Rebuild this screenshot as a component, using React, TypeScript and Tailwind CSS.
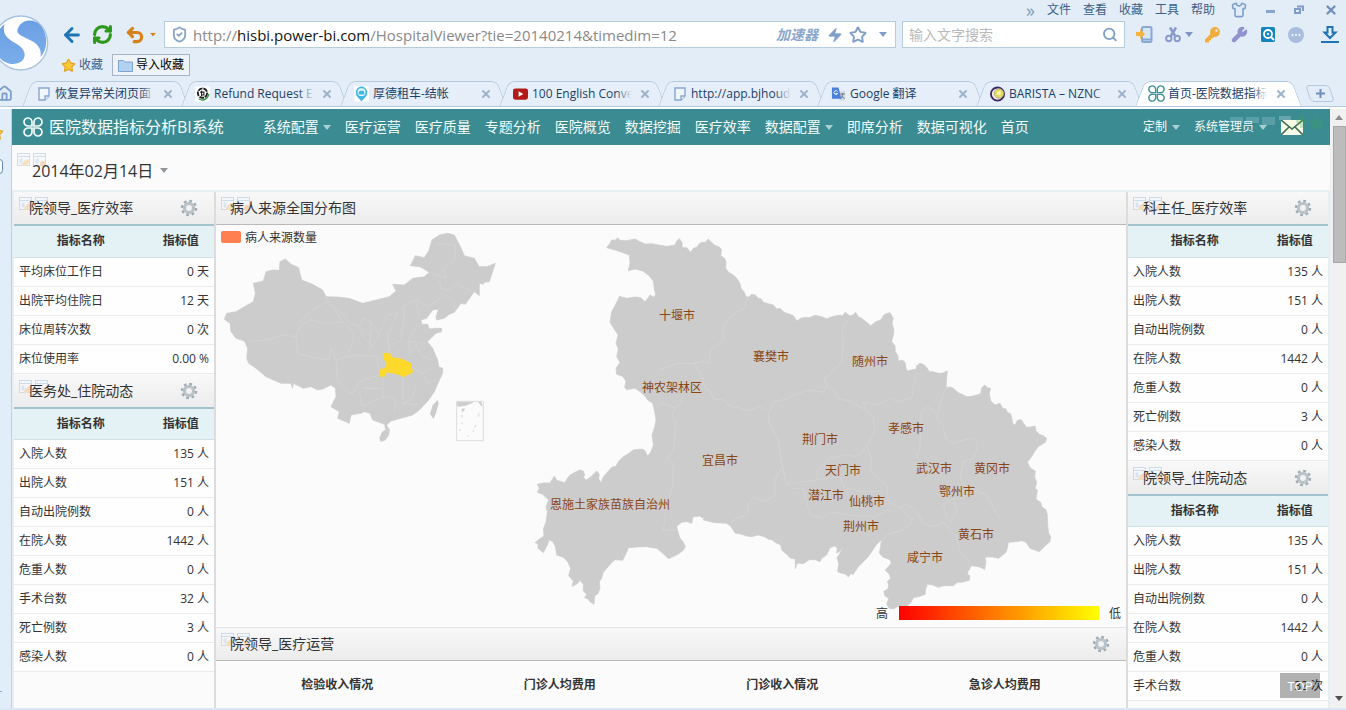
import React from 'react';
import {
  ArrowLeft,
  RefreshCw,
  Undo2,
  ShieldCheck,
  Star,
  Zap,
  Search,
  Shirt,
  Wrench,
  House,
  X,
} from 'lucide-react';

type Row = [string, string];

function Caret({ className = '' }: { className?: string }) {
  return (
    <svg viewBox="0 0 8 5" className={`h-[5px] w-2 shrink-0 ${className}`} aria-hidden="true">
      <path d="M0 0h8L4 5z" fill="currentColor" />
    </svg>
  );
}

function Clover({ className = '' }: { className?: string }) {
  return (
    <svg viewBox="0 0 20 20" className={`shrink-0 ${className}`} fill="none" stroke="currentColor" strokeWidth="1.7" aria-hidden="true">
      <path d="M9 9V5.2A4 4 0 1 0 5.2 9Z" />
      <path d="M11 9V5.2A4 4 0 1 1 14.8 9Z" />
      <path d="M9 11V14.8A4 4 0 1 1 5.2 11Z" />
      <path d="M11 11V14.8A4 4 0 1 0 14.8 11Z" />
    </svg>
  );
}

function Gear() {
  return (
    <svg viewBox="0 0 18 18" className="h-[18px] w-[18px]" fill="none" aria-hidden="true">
      <circle cx="9" cy="9" r="7" stroke="#9fabb2" strokeWidth="2.4" strokeDasharray="2.75 2.75" />
      <circle cx="9" cy="9" r="5" stroke="#b6c0c6" strokeWidth="2.2" />
      <circle cx="9" cy="9" r="3.6" stroke="#8f9ba3" strokeWidth="0.6" />
    </svg>
  );
}

function EditMarks({ className = '' }: { className?: string }) {
  return (
    <svg viewBox="0 0 30 15" className={`h-[15px] w-[30px] opacity-70 ${className}`} aria-hidden="true">
      {[0, 16].map((x) => (
        <g key={x} transform={`translate(${x} 0)`}>
          <rect x="0.5" y="0.5" width="12" height="12" fill="#f4f8fd" stroke="#bdd1e8" />
          <path d="M1 3.5h11" stroke="#bdd1e8" />
          <rect x="2.5" y="5.500" width="3" height="5" fill="#cfdff2" />
        </g>
      ))}
      <path d="M5 13l1-4 4-3 3 2-4 5z" fill="#f5d5a8" />
      <circle cx="26" cy="11" r="3" fill="#f2c9a0" />
    </svg>
  );
}

function BrowserLogo() {
  return (
    <svg viewBox="-21 44 168 168" className="-ml-[7px] mt-[15px] h-14 w-14 shrink-0" aria-label="浏览器">
      <defs>
        <linearGradient id="logoBlue" x1="0" y1="0" x2="0" y2="1">
          <stop offset="0" stopColor="#6b9fe4" />
          <stop offset="1" stopColor="#79adea" />
        </linearGradient>
      </defs>
      <circle cx="62" cy="128" r="81" fill="#fff" stroke="#a9c2e0" strokeWidth="4" />
      <path d="M54 84C66 54 106 54 124 78C146 108 142 148 122 170C126 142 110 128 88 118C62 106 46 100 54 84Z" fill="url(#logoBlue)" />
      <path d="M14 71C4 100 24 116 44 127C70 141 82 160 68 180C52 198 10 194-6 164C-22 130-10 88 14 71Z" fill="url(#logoBlue)" />
    </svg>
  );
}

const menus = ['文件', '查看', '收藏', '工具', '帮助'];

function BrowserBar() {
  return (
    <header className="flex items-start">
      <BrowserLogo />
      <div className="min-w-0 flex-1">
        <div className="flex h-[21px] items-center justify-end pb-0.5 pr-2 text-[12px] leading-[18px] text-[#3c5f88]">
          <button className="mr-3 text-[18px] text-[#7f9cc4]" aria-label="更多">»</button>
          <div className="flex gap-3">
            {menus.map((m) => (
              <button key={m}>{m}</button>
            ))}
          </div>
          <button className="ml-4" aria-label="皮肤"><Shirt className="h-4 w-4 text-[#7f9fcb]" strokeWidth={2.4} /></button>
          <button className="ml-[19px] mt-1 h-[3px] w-[9px] bg-[#8aa5cc]" aria-label="最小化" />
          <button className="ml-[19px]" aria-label="还原">
            <svg viewBox="0 0 10 9" className="h-[9px] w-[10px]" fill="none" stroke="#7f9dc6" strokeWidth="2"><path d="M3 1.5h6v4.5M1 4h5v4H1z" /></svg>
          </button>
          <button className="ml-5" aria-label="关闭"><X className="h-[14px] w-[14px] text-[#6f8fbd]" strokeWidth={4} /></button>
        </div>

        <div className="flex h-[27px] items-center pl-3 pr-[7px]">
          <button aria-label="后退"><ArrowLeft className="h-[22px] w-[22px] text-[#1f74b4]" strokeWidth={3.2} /></button>
          <button className="ml-[9px]" aria-label="刷新"><RefreshCw className="h-[21px] w-[21px] text-[#2d981b]" strokeWidth={3.6} /></button>
          <button className="ml-3 flex items-center" aria-label="撤销">
            <Undo2 className="h-[20px] w-[20px] text-[#d9801a]" strokeWidth={3.8} />
            <Caret className="ml-1 scale-75 text-[#d9801a]" />
          </button>
          <div className="ml-[7px] flex h-[27px] flex-1 items-center border border-[#b7cbdf] bg-white pl-1.5 pr-2">
            <ShieldCheck className="h-[17px] w-[17px] text-[#8aa6c6]" strokeWidth={2.6} />
            <div className="ml-[5px] flex-1 text-[15px] leading-[24px] text-[#8a8a8a]">
              http://<span className="text-[#151515]">hisbi.power-bi.com</span>/HospitalViewer?tie=20140214&amp;timedim=12
            </div>
            <button className="text-[14px] font-bold italic leading-5 text-[#8ba6cb]">加速器</button>
            <Zap className="ml-[9px] h-4 w-4 fill-[#809fc8] text-[#809fc8]" strokeWidth={1} />
            <Star className="ml-1.5 h-[18px] w-[18px] text-[#7f9fc8]" strokeWidth={2.6} />
            <Caret className="ml-3 text-[#7f9fc8]" />
          </div>
          <div className="ml-1.5 flex h-[27px] w-[223px] items-center border border-[#b7cbdf] bg-white px-[6px]">
            <input aria-label="搜索" placeholder="输入文字搜索" className="w-full min-w-0 bg-transparent text-[14px] leading-5 outline-none placeholder:text-[#b9b9b9]" />
            <Search className="h-[17px] w-[17px] text-[#7f9fc8]" strokeWidth={2.8} />
          </div>
          <div className="flex items-center pl-[11px]">
            <svg viewBox="0 0 17 17" className="h-[17px] w-[17px]" aria-hidden="true">
              <rect x="6" y="1" width="9.5" height="15" rx="1.5" fill="#d8e5f5" stroke="#8aa9d2" strokeWidth="2" />
              <path d="M6 13.5h9.5" stroke="#8aa9d2" strokeWidth="2" />
              <path d="M0 6h4V3l5 5-5 5v-3H0z" fill="#f5b23c" />
            </svg>
            <svg viewBox="0 0 16 17" className="ml-3 h-[17px] w-4" fill="none" stroke="#8c9bcb" aria-hidden="true">
              <circle cx="3.800" cy="12.500" r="2.700" strokeWidth="2" />
              <circle cx="12.200" cy="12.500" r="2.700" strokeWidth="2" />
              <path d="M5 1.500L10.500 10.500M11 1.500L5.500 10.500" strokeWidth="2.600" />
            </svg>
            <Caret className="ml-1 text-[#7f96c4]" />
            <svg viewBox="0 0 17 17" className="ml-[11px] h-[17px] w-[17px]" aria-hidden="true">
              <path d="M7.500 7L1 13.500V16.500h4v-2h2v-2h1.500L11 10z" fill="#f1ad3f" />
              <circle cx="11" cy="6" r="5" fill="#f1ad3f" />
              <circle cx="12.500" cy="4.500" r="1.300" fill="#e3edf8" />
            </svg>
            <Wrench className="ml-[10px] h-[17px] w-[17px] fill-[#8f94cf] text-[#8f94cf]" strokeWidth={2} />
            <svg viewBox="0 0 16 17" className="ml-3 h-[17px] w-4" fill="none" aria-hidden="true">
              <rect x="1" y="1" width="14" height="15" rx="1.5" fill="#1584bd" />
              <circle cx="8" cy="8" r="4" stroke="#fff" strokeWidth="1.8" />
              <circle cx="8" cy="8" r="1.2" fill="#cfe8f5" />
              <path d="M11 11l3 3" stroke="#fff" strokeWidth="2" />
            </svg>
            <svg viewBox="0 0 16 16" className="ml-3 h-4 w-4" aria-hidden="true">
              <circle cx="8" cy="8" r="8" fill="#a9bedf" />
              <g fill="#fff"><circle cx="4.5" cy="8" r="1" /><circle cx="8" cy="8" r="1" /><circle cx="11.5" cy="8" r="1" /></g>
            </svg>
            <svg viewBox="0 0 18 17" className="ml-[17px] h-[17px] w-[18px]" fill="none" stroke="#1f74b4" strokeWidth="2" aria-hidden="true">
              <path d="M6.5 1h5v5.5h3L9 12 3.5 6.500h3z" /><path d="M0 16h18" />
            </svg>
          </div>
        </div>

        <div className="mt-1.5 flex h-[22px] items-center pl-3 text-[12px] leading-5">
          <button className="flex items-center gap-[3px] text-[#3f5f86]">
            <Star className="h-[15px] w-[15px] fill-[#fbc834] text-[#e0a52c]" />
            收藏
          </button>
          <button className="ml-[9px] flex h-[22px] items-center gap-[3px] border border-[#a7b4c8] bg-[#eef3fa] px-[5px] text-black">
            <svg viewBox="0 0 15 13" className="h-[13px] w-[15px]" aria-hidden="true"><path d="M.5 1.5h5l1.5 1.5h7.5v9.5H.5z" fill="#b3d1f1" stroke="#7fa3cf" /></svg>
            导入收藏
          </button>
        </div>
      </div>
    </header>
  );
}

const pageIcon = (
  <svg viewBox="0 0 12 14" className="h-[14px] w-3" fill="#f1f6fc" stroke="#86a6d0" strokeWidth="1.4" aria-hidden="true">
    <path d="M1 1h10v8l-4 4H1z" />
    <path d="M7 13V9h4" />
  </svg>
);

const tabs: { label: string; icon: React.ReactNode }[] = [
  { label: '恢复异常关闭页面', icon: pageIcon },
  {
    label: 'Refund Request Ex',
    icon: (
      <svg viewBox="0 0 16 16" className="h-4 w-4" fill="none"><rect width="16" height="16" fill="#fff" /><circle cx="8" cy="7" r="5" stroke="#1e1e1e" strokeWidth="2" strokeDasharray="5 1" /><path d="M5.5 6h4v3h-3M7 4.5v6" stroke="#222" strokeWidth="1.2" /><path d="M4 13c4 3 9 1 11-5" stroke="#3f9a52" strokeWidth="1.5" /></svg>
    ),
  },
  {
    label: '厚德租车-结帐',
    icon: (
      <svg viewBox="0 0 16 16" className="h-4 w-4"><rect width="16" height="16" fill="#fff" /><path d="M8 0a6.5 6.5 0 0 1 6 7c0 4-4 6-6 9-2-3-6-5-6-9a6.5 6.5 0 0 1 6-7z" fill="#41b8e4" /><circle cx="8" cy="6" r="4.200" fill="#e6f7fd" /><path d="M5 6.500l1-2h4l1 2v2H5z" fill="#41b8e4" /></svg>
    ),
  },
  {
    label: '100 English Conversations',
    icon: (
      <svg viewBox="0 0 16 12" className="h-3 w-4"><rect width="16" height="12" rx="2.5" fill="#b31b1b" /><path d="M6 3l5 3-5 3z" fill="#fff" /></svg>
    ),
  },
  { label: 'http://app.bjhoude.com', icon: pageIcon },
  {
    label: 'Google 翻译',
    icon: (
      <svg viewBox="0 0 16 16" className="h-4 w-4"><path d="M7 5h8v10H9z" fill="#d4d7dc" /><path d="M1 1h7l3 12H1z" fill="#4a80dc" /><path d="M7 5.5a2 2 0 1 0 0 2H5" stroke="#fff" fill="none" /><path d="M10 8h5M12.5 7v1c0 2-1 4-2 5M11 10l3.500 3" stroke="#6b7684" fill="none" /></svg>
    ),
  },
  {
    label: 'BARISTA – NZNC',
    icon: (
      <svg viewBox="0 0 16 16" className="h-4 w-4"><circle cx="8" cy="8" r="7" fill="#f4f1e4" stroke="#3c2663" strokeWidth="2" /><circle cx="9.5" cy="7.5" r="5" fill="#e3dc62" /><circle cx="9.5" cy="7" r="2.2" fill="#fbf7a0" /><circle cx="9.5" cy="7.5" r="5" fill="none" stroke="#aaa98e" /></svg>
    ),
  },
  { label: '首页-医院数据指标分析', icon: <Clover className="h-[17px] w-[17px] text-[#3f9297]" /> },
];

function TabStrip() {
  return (
    <nav className="flex h-[26px] items-stretch overflow-hidden border-b border-[#b5c9de]" aria-label="标签页">
      <button className="flex w-[22px] items-center" aria-label="主页"><House className="-ml-1 h-[17px] w-[17px] text-[#7fa0c8]" strokeWidth={2.6} /></button>
      {tabs.map((t, i) => {
        const active = i === tabs.length - 1;
        const fill = active ? 'bg-white' : 'bg-[#e6eef9]';
        return (
          <div key={t.label} className="relative flex min-w-0 max-w-[159px] flex-1 items-center pl-[14px]">
            <span className={`absolute inset-y-0 left-[5px] right-1/2 -skew-x-[21deg] rounded-tl-md border-l border-t border-[#b5c9de] ${fill}`} />
            <span className={`absolute inset-y-0 -right-[3px] left-1/3 skew-x-[21deg] rounded-tr-md border-r border-t border-[#b5c9de] ${fill}`} />
            <button className="relative flex min-w-0 flex-1 items-center gap-1 text-left text-[12px] leading-5 text-[#1c3f66]">
              <span className="flex w-[15px] shrink-0 justify-center">{t.icon}</span>
              <span className="relative min-w-0 flex-1 overflow-hidden whitespace-nowrap">
                {t.label}
                <span className={`absolute inset-y-0 right-0 w-4 bg-gradient-to-r from-transparent ${active ? 'to-white' : 'to-[#e6eef9]'}`} />
              </span>
            </button>
            <button className="relative ml-[7px] pr-[7px]" aria-label="关闭标签"><X className="h-3 w-3 text-[#9fb3cd]" strokeWidth={4} /></button>
          </div>
        );
      })}
      <button className="ml-[14px] flex h-[17px] w-6 skew-x-[18deg] items-center justify-center self-center rounded-sm border border-[#b5c9de]" aria-label="新标签页">
        <svg viewBox="0 0 9 9" className="h-[9px] w-[9px] -skew-x-[18deg]" stroke="#7190bb" strokeWidth="2"><path d="M4.500 0v9M0 4.500h9" /></svg>
      </button>
    </nav>
  );
}

const nav: { label: string; menu?: boolean }[] = [
  { label: '系统配置', menu: true },
  { label: '医疗运营' },
  { label: '医疗质量' },
  { label: '专题分析' },
  { label: '医院概览' },
  { label: '数据挖掘' },
  { label: '医疗效率' },
  { label: '数据配置', menu: true },
  { label: '即席分析' },
  { label: '数据可视化' },
  { label: '首页' },
];

function AppHeader() {
  return (
    <header className="flex h-9 shrink-0 items-center bg-[#3a8b92] pl-[11px] pr-[27px] text-[#f3fcfc]">
      <Clover className="h-5 w-5" />
      <h1 className="ml-1.5 whitespace-nowrap text-[16px] leading-6">医院数据指标分析BI系统</h1>
      <nav className="ml-[39px] flex gap-[14px] whitespace-nowrap text-[14px] leading-5">
        {nav.map((n) => (
          <a key={n.label} href="#" className="flex items-center gap-1">
            {n.label}
            {n.menu && <Caret className="text-[#a9d0d2]" />}
          </a>
        ))}
      </nav>
      <div className="ml-auto flex items-center gap-[14px] whitespace-nowrap text-[12px] leading-5">
        <button className="flex items-center gap-[5px]">定制<Caret className="text-[#a9d0d2]" /></button>
        <button className="flex items-center gap-[5px]">系统管理员<Caret className="text-[#a9d0d2]" /></button>
        <a href="#" aria-label="邮件" className="relative">
          <svg viewBox="0 0 22 15" className="h-[15px] w-[22px]"><rect width="22" height="15" fill="#f7fbe6" /><path d="M0 0l11 9L22 0M0 15l8-8M22 15l-8-8" fill="none" stroke="#3f6f55" strokeWidth="1.6" /></svg>
          <svg viewBox="0 0 96 16" className="absolute -left-[51px] -top-[5px] h-4 w-24 opacity-25" aria-hidden="true">
            <path d="M0 2h13v6H0zM16 2h13v6H16zM32 2h13v8H32z" fill="#b9d7e6" /><path d="M49 1h12v4H49z" fill="#e6f2fa" />
            <path d="M66 4h4V0h4v4h4v4h-4v5h-4V8h-4zM86 1l3 4 5 1-3 4 1 5-6-2-5 2 1-5-3-4 5-1z" fill="#3faa4c" />
          </svg>
        </a>
      </div>
    </header>
  );
}

function PanelHead({ title, gear = true, wide = false }: { title: string; gear?: boolean; wide?: boolean }) {
  return (
    <div
      className={`relative flex items-center justify-between bg-gradient-to-b from-[#f8f8f8] to-[#ececec] text-[14px] leading-[22px] text-[#333] ${
        wide ? 'h-[33px] border-b border-[#b9b9b9] pl-[14px] pr-4' : 'h-[34px] border-b-2 border-[#a5c3ce] pl-[15px] pr-4'
      }`}
    >
      <EditMarks className="absolute left-[5px] top-[5px]" />
      <h2 className="relative">{title}</h2>
      {gear && <button aria-label={`${title}设置`}><Gear /></button>}
    </div>
  );
}

function MetricPanel({ title, rows }: { title: string; rows: Row[] }) {
  return (
    <section className="mb-px">
      <PanelHead title={title} />
      <table className="w-full table-fixed border-collapse bg-[#fefefe] text-[12px] leading-[18px] text-[#333]">
        <thead>
          <tr className="h-[31px] border-b border-[#cfe0e6] bg-[#e4f2f6]">
            <th className="w-2/3 p-0 font-bold">指标名称</th>
            <th className="w-1/3 p-0 font-bold">指标值</th>
          </tr>
        </thead>
        <tbody>
          {rows.map(([name, value]) => (
            <tr key={name} className="h-[29px] border-b border-[#ebebeb]">
              <td className="p-0 pl-[5px]">{name}</td>
              <td className="whitespace-nowrap p-0 pr-[5px] text-right">{value}</td>
            </tr>
          ))}
        </tbody>
      </table>
    </section>
  );
}

const efficiency: Row[] = [['平均床位工作日', '0 天'], ['出院平均住院日', '12 天'], ['床位周转次数', '0 次'], ['床位使用率', '0.00 %']];
const inpatient: Row[] = [['入院人数', '135 人'], ['出院人数', '151 人'], ['自动出院例数', '0 人'], ['在院人数', '1442 人'], ['危重人数', '0 人'], ['手术台数', '32 人'], ['死亡例数', '3 人'], ['感染人数', '0 人']];
const director: Row[] = [['入院人数', '135 人'], ['出院人数', '151 人'], ['自动出院例数', '0 人'], ['在院人数', '1442 人'], ['危重人数', '0 人'], ['死亡例数', '3 人'], ['感染人数', '0 人']];
const leader: Row[] = [['入院人数', '135 人'], ['出院人数', '151 人'], ['自动出院例数', '0 人'], ['在院人数', '1442 人'], ['危重人数', '0 人'], ['手术台数', '32 次']];

const hubei =
  '260,68 268,58 275,45 285,46 293,38 300,46 320,47 345,42 360,50 375,57 395,56 415,60 440,64 465,60 470,48 478,41 486,52 487,68 500,68 512,82 520,70 530,67 538,56 545,52 556,52 565,42 575,52 583,60 598,66 605,75 602,92 614,100 618,110 617,130 626,142 640,150 650,160 660,175 663,190 672,200 678,215 686,216 695,208 706,210 715,220 724,222 730,232 745,236 760,240 770,252 780,250 792,262 810,268 820,272 831,288 842,280 855,277 868,278 885,271 905,275 920,281 940,274 960,270 967,273 975,262 990,273 998,270 1007,262 1016,276 1025,280 1040,292 1052,302 1068,290 1082,285 1090,272 1098,266 1110,263 1120,280 1116,295 1122,315 1120,330 1115,350 1125,362 1126,380 1134,392 1135,408 1148,406 1155,412 1158,430 1162,438 1175,434 1188,433 1190,422 1200,415 1210,418 1220,427 1228,440 1240,440 1255,445 1268,444 1282,438 1280,460 1278,488 1290,486 1300,490 1315,503 1325,507 1340,515 1355,514 1370,510 1382,506 1385,488 1395,480 1402,488 1412,490 1408,505 1412,527 1425,540 1440,535 1448,550 1458,552 1462,562 1472,566 1476,582 1478,597 1486,599 1492,586 1504,584 1510,594 1520,607 1532,606 1545,603 1548,617 1558,628 1570,632 1580,640 1576,652 1556,664 1545,678 1537,692 1522,712 1528,724 1532,730 1546,738 1544,756 1550,772 1546,790 1552,796 1548,823 1562,832 1566,846 1578,854 1582,870 1583,900 1586,925 1592,935 1590,950 1576,962 1558,980 1530,970 1518,952 1506,947 1488,950 1465,952 1462,970 1458,982 1436,1000 1418,996 1395,996 1398,1012 1394,1033 1378,1026 1355,1022 1346,1036 1342,1048 1350,1052 1348,1066 1325,1072 1312,1072 1300,1082 1272,1082 1255,1087 1238,1080 1222,1078 1216,1096 1216,1108 1200,1114 1180,1118 1172,1134 1160,1144 1135,1144 1120,1152 1108,1150 1100,1138 1106,1120 1094,1112 1092,1098 1104,1092 1106,1078 1102,1070 1112,1060 1108,1048 1096,1036 1104,1026 1114,1014 1110,1004 1088,996 1078,984 1082,964 1084,945 1070,958 1045,995 1015,1025 998,1050 994,1044 985,1056 978,1048 960,1043 953,1040 956,1016 951,998 958,988 970,966 958,980 950,984 952,970 945,963 930,968 920,990 905,1000 900,1010 886,1004 868,1004 850,1016 832,1014 826,1031 826,1002 812,1000 800,988 785,975 782,960 765,952 756,944 745,943 735,936 715,930 695,935 680,933 665,928 645,924 632,904 620,895 585,893 550,885 552,877 545,878 540,873 518,876 516,895 500,890 485,892 470,904 474,920 480,940 488,948 496,964 490,976 475,987 462,994 445,1001 430,986 410,970 395,968 380,965 355,966 325,968 320,982 308,1006 285,1004 275,1013 262,1028 250,1042 245,1060 238,1070 240,1090 234,1106 224,1112 222,1138 210,1130 204,1122 194,1118 200,1108 190,1098 190,1078 180,1066 172,1076 156,1084 160,1068 146,1052 152,1030 144,1012 130,997 110,990 106,964 98,950 88,944 82,960 70,983 54,970 54,956 45,953 55,944 72,933 70,912 78,890 82,860 78,845 86,825 68,808 52,802 58,790 52,778 70,774 90,774 103,753 110,766 135,773 142,760 150,750 165,742 180,735 190,738 194,750 190,758 200,765 212,756 230,738 238,748 236,762 243,773 250,755 262,742 276,726 288,724 296,708 310,695 325,686 340,675 365,672 374,676 383,693 392,682 400,660 396,630 404,605 408,585 404,560 398,535 382,524 375,514 360,500 345,490 320,494 314,486 318,468 308,454 290,448 288,430 300,412 290,395 295,372 288,355 294,330 280,308 270,292 275,260 286,240 295,222 298,214 320,220 345,216 362,218 375,230 385,218 390,210 400,216 407,210 402,185 400,168 385,150 368,138 345,132 325,137 330,115 328,90 305,82 285,75';

const hubeiLines = [
  'M683 218L672 250 650 262 620 285 608 312 612 340 590 362 572 372 568 415 545 408 520 416 470 415 440 428 415 435',
  'M525 415L530 430 545 450 555 490 570 495 582 522 612 525 632 545 655 548 680 558 720 545 745 560 745 585 775 650 785 710 800 780 812 775',
  'M750 560L760 530 800 522 822 510 865 495 910 502 920 480 912 462 935 440 965 410 970 350 966 315 980 285',
  'M920 480L945 500 950 520 990 528 1035 555 1060 575 1064 620 1040 665 1010 695 980 690 930 700 895 735 890 765 815 775',
  'M1035 550L1030 532 1070 540 1115 520 1130 530 1175 520 1190 440',
  'M1282 485L1265 520 1250 580 1270 600 1275 640 1300 655 1330 645 1360 640 1375 660 1360 700 1330 710 1320 760 1345 790 1400 810 1420 850 1440 880',
  'M1250 565L1225 545 1205 555 1200 660 1190 700',
  'M1040 665L1055 700 1050 740 1100 780 1105 830 1140 850 1160 835 1190 860 1210 895 1240 905 1270 890 1295 920 1310 940 1320 980 1345 1010 1350 1035',
  'M820 790L850 790 870 870 910 880 930 860 980 870 1060 875 1110 855',
  'M890 765L960 755 975 790 1040 800 1090 800M1140 850L1180 885 1150 915 1100 930 1082 955',
  'M1300 820L1270 840 1280 880 1300 900M1345 790L1330 820 1300 820 1310 860 1290 890',
  'M468 585L465 630 458 680 440 700 460 715 458 780 440 850 430 915 470 915',
  'M785 730L765 760 765 810 735 830 700 815 685 840 680 870 650 880 630 895',
  'M410 545L430 535 465 550 455 575 468 590M490 510L480 540 462 550',
];

const china =
  '25,283 32,265 60,260 85,245 112,230 118,205 112,175 142,168 150,140 170,135 190,136 192,110 208,102 225,118 248,128 257,165 290,178 320,195 330,215 365,216 400,220 440,235 480,225 520,215 540,198 530,178 565,180 590,160 625,155 640,142 612,125 583,122 598,92 625,98 638,78 648,45 670,30 695,25 715,30 728,55 738,75 745,92 775,100 790,125 812,125 838,115 820,170 805,172 802,178 790,175 790,212 775,200 748,238 735,235 715,262 700,268 685,280 662,285 660,275 668,252 650,255 632,280 615,285 618,298 635,298 640,312 655,310 677,310 677,320 660,325 645,340 634,350 650,370 665,405 668,425 680,430 680,445 668,470 655,500 638,525 610,555 590,570 555,580 525,588 512,600 518,612 508,612 506,598 470,585 462,565 445,560 435,565 405,570 400,595 365,580 370,560 345,545 360,515 358,490 345,480 320,492 305,495 285,485 262,490 232,475 230,490 225,475 195,475 150,455 120,430 98,415 92,400 95,370 85,348 60,340 45,320 42,295';

const chinaLines = [
  'M95 350L150 345 200 330 240 335 255 300 285 285 330 295 380 290 410 320 415 345 395 385M240 335L245 385 300 398 340 405 345 370 360 405 420 390 480 395 500 410',
  'M250 290L290 255 330 230 365 265 375 285M330 215L345 240 385 270 400 295 430 305 440 280 465 290 490 330 470 365 445 340 430 310',
  'M465 290L462 375M490 320L515 270 545 265 515 330 520 390M545 265L565 240 562 300 555 345 520 365M565 240L600 225 635 245 690 210 715 235',
  'M640 142L690 160 680 135 718 100 718 60 660 55M670 165L675 190 705 195 720 175 760 195 785 205M600 230L610 280',
  'M580 340L600 305 618 298M575 350L630 355M580 340L580 390 600 360 620 395 650 405M590 430L620 445 650 425M620 445L635 475 665 465',
  'M360 405L365 470 400 505 415 500 430 470 490 450M440 490L500 490 500 515 540 520 535 560M430 500L440 545 500 515M500 455L500 490M560 455L560 525M600 470L590 520 560 535 600 540M480 395L490 435',
];

const cities: [string, number, number][] = [
  ['十堰市', 677, 315], ['襄樊市', 771, 356], ['随州市', 870, 361], ['神农架林区', 672, 387], ['荆门市', 820, 439], ['孝感市', 906, 428],
  ['宜昌市', 720, 460], ['天门市', 843, 470], ['武汉市', 934, 468], ['黄冈市', 992, 468], ['鄂州市', 957, 491], ['潜江市', 826, 495],
  ['仙桃市', 867, 501], ['恩施土家族苗族自治州', 610, 504], ['荆州市', 861, 526], ['黄石市', 976, 534], ['咸宁市', 925, 557],
];

function SourceMap() {
  return (
    <svg viewBox="216 225 910 402" className="block h-auto w-full text-[12px]" role="img" aria-label="病人来源全国分布图">
      <defs>
        <linearGradient id="heat"><stop offset="0" stopColor="#ff0000" /><stop offset="1" stopColor="#ffff00" /></linearGradient>
      </defs>
      <g transform="translate(216 225) scale(0.33333)" strokeLinejoin="round">
        <polygon points={china} fill="#ccc" stroke="#ccc" strokeWidth="2" />
        <path d="M522 612l-4 20-10 14-14 5-4-12 8-18 12-8zM665 525l3 10-8 30-8 17-10-16 8-25z" fill="#ccc" />
        <path d={chinaLines.join('')} fill="none" stroke="#d8d8d8" strokeWidth="1.500" />
        <polygon points="500,385 520,383 530,397 560,402 585,415 591,442 572,452 563,457 550,450 530,445 512,443 506,455 492,455 489,434 508,428 512,415 502,402" fill="#fdd92c" />
        <rect x="722" y="529" width="80" height="118" fill="none" stroke="#dcdcdc" strokeWidth="3" />
        <path d="M724 532h46l-20 9-24 3zM788 532l10 12-3-12zM738 552l8 0-6 8zM738 570v8M790 565l-4 10M739 593l-3 5M780 600l-4 8M732 612v6M774 615l-3 6M756 632v4" fill="#ccc" stroke="#ccc" strokeWidth="2.5" />
      </g>
      <g transform="translate(520 225) scale(0.33333)" strokeLinejoin="round">
        <polygon points={hubei} fill="#ccc" stroke="#ccc" strokeWidth="2" />
        <path d={hubeiLines.join('')} fill="none" stroke="#d7d7d7" strokeWidth="2" />
      </g>
      <rect x="221" y="231" width="20" height="12" rx="2" fill="#ff7f50" />
      <text x="245" y="242" fill="#333">病人来源数量</text>
      <g fill="#8b4513" textAnchor="middle">
        {cities.map(([name, x, y]) => (
          <text key={name} x={x} y={y + 5}>{name}</text>
        ))}
      </g>
      <text x="876" y="618" fill="#333">高</text>
      <rect x="899" y="606" width="200" height="14" fill="url(#heat)" />
      <text x="1109" y="618" fill="#333">低</text>
    </svg>
  );
}

export default function App() {
  return (
    <div className="flex h-screen flex-col overflow-hidden border-b-2 border-[#dbe7f4] bg-[#e3edf8] font-['Open_Sans','Noto_Sans_CJK_SC',sans-serif]">
      <BrowserBar />
      <div className="mt-[5px]"><TabStrip /></div>
      <div className="h-0.5 shrink-0 bg-white" />
      <div className="flex min-h-0 flex-1">
        <aside className="relative w-3 shrink-0 overflow-hidden border-r border-[#bcd0e6] bg-[#e1edf9]">
          <Star className="-ml-3 mt-4 h-4 w-4 fill-[#fbd25c] text-[#e3ab3c]" />
          <div className="-ml-1 mt-[18px] h-[15px] w-[7px] rounded-sm border border-[#5b88b8] bg-white" />
          <div className="absolute bottom-4 left-0 h-px w-[2px] bg-[#8aa6c6]" />
        </aside>
        <main className="relative flex min-w-0 flex-1 flex-col overflow-hidden bg-[#fbfbfb]">
          <AppHeader />
          <div className="relative flex h-[45px] shrink-0 items-center pl-5 pt-1.5">
            <EditMarks className="absolute left-[5px] top-2" />
            <button className="relative flex items-center gap-[7px] text-[16px] leading-6 text-[#333]">
              2014年02月14日
              <Caret className="text-[#8f9599]" />
            </button>
          </div>
          <div className="flex min-h-0 flex-1 items-stretch border-x-2 border-t-2 border-[#e6eff3]">
            <div className="w-[200px] shrink-0">
              <MetricPanel title="院领导_医疗效率" rows={efficiency} />
              <MetricPanel title="医务处_住院动态" rows={inpatient} />
            </div>
            <div className="min-w-0 flex-1 border-x-2 border-[#dcdcdc]">
              <PanelHead title="病人来源全国分布图" gear={false} wide />
              <SourceMap />
              <section className="border-t border-[#e4e4e4]">
                <PanelHead title="院领导_医疗运营" wide />
                <div className="grid grid-cols-4 px-2.5 pt-[14px] text-center text-[12px] font-bold leading-5 text-[#333]">
                  <h3>检验收入情况</h3>
                  <h3>门诊人均费用</h3>
                  <h3>门诊收入情况</h3>
                  <h3>急诊人均费用</h3>
                </div>
              </section>
            </div>
            <div className="w-[200px] shrink-0">
              <MetricPanel title="科主任_医疗效率" rows={director} />
              <MetricPanel title="院领导_住院动态" rows={leader} />
            </div>
          </div>
          <button className="absolute bottom-2.5 right-2.5 h-[25px] w-10 bg-black/30 text-[13px] leading-5 text-white">TOP</button>
        </main>
        <div className="flex w-4 shrink-0 flex-col items-center border-l-2 border-[#f1f1f1] bg-[#f1f1f1]" aria-hidden="true">
          <Caret className="my-1.5 rotate-180 text-[#8c8c8c]" />
          <div className="h-[137px] w-[13px] border border-[#a8a8a8] bg-[#bcbcbc]" />
          <Caret className="mb-[7px] mt-auto text-[#505050]" />
        </div>
      </div>
    </div>
  );
}
